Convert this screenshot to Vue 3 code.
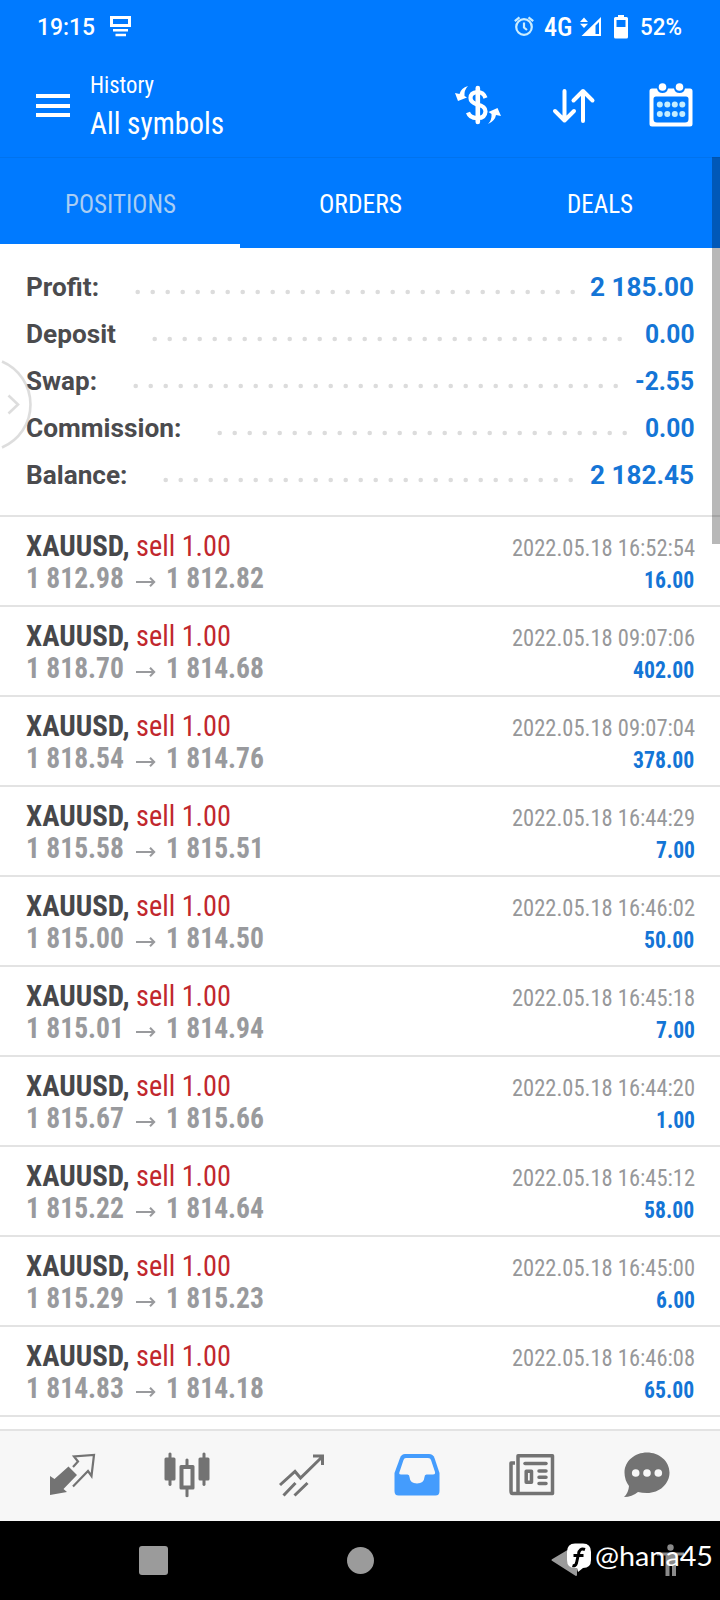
<script setup>
import { h } from 'vue'

// Single line of text condensed to a given advance width.
const Txt = ({ w, t, b = 24, hh = 30 }) =>
  h('svg', { width: w, height: hh, viewBox: `0 0 ${w} ${hh}` }, [
    h('text', { x: 0, y: b, textLength: w, lengthAdjust: 'spacingAndGlyphs' }, t),
  ])
Txt.props = ['w', 't', 'b', 'hh']

const tabs = [
  { t: 'POSITIONS', w: 111, on: true },
  { t: 'ORDERS', w: 83 },
  { t: 'DEALS', w: 66 },
]
const summary = [
  { k: 'Profit:', w: 73, v: '2 185.00', vw: 104, from: 137.7, n: 30 },
  { k: 'Deposit', w: 90, v: '0.00', vw: 49.5, from: 154.7, n: 32 },
  { k: 'Swap:', w: 71, v: '-2.55', vw: 59, from: 135.7, n: 33 },
  { k: 'Commission:', w: 155.5, v: '0.00', vw: 49.5, from: 219.7, n: 28 },
  { k: 'Balance:', w: 101.5, v: '2 182.45', vw: 104, from: 165.7, n: 28 },
]
const rows = [
  ['1 812.98', '1 812.82', '2022.05.18 16:52:54', '16.00'],
  ['1 818.70', '1 814.68', '2022.05.18 09:07:06', '402.00'],
  ['1 818.54', '1 814.76', '2022.05.18 09:07:04', '378.00'],
  ['1 815.58', '1 815.51', '2022.05.18 16:44:29', '7.00'],
  ['1 815.00', '1 814.50', '2022.05.18 16:46:02', '50.00'],
  ['1 815.01', '1 814.94', '2022.05.18 16:45:18', '7.00'],
  ['1 815.67', '1 815.66', '2022.05.18 16:44:20', '1.00'],
  ['1 815.22', '1 814.64', '2022.05.18 16:45:12', '58.00'],
  ['1 815.29', '1 815.23', '2022.05.18 16:45:00', '6.00'],
  ['1 814.83', '1 814.18', '2022.05.18 16:46:08', '65.00'],
]
const profitWidth = (s) => (s.length - 1) * 11.15 + 5.5
</script>

<template>
  <div class="screen">
    <header class="top">
      <div class="status">
        <Txt class="clock" :w="58" t="19:15" :b="23" />
        <svg class="castico" width="22" height="22" viewBox="0 0 22 22">
          <path d="M1.5 1.5H19.5V9.5H1.5Z" fill="none" stroke="#fff" stroke-width="3" />
          <path d="M3 14.3H18M5.500 19H16" stroke="#fff" stroke-width="2.6" />
        </svg>
        <span class="grow"></span>
        <svg class="alarm" width="20" height="20" viewBox="0 0 20 20" fill="none" stroke="#c9ecff" stroke-width="2.2">
          <circle cx="10" cy="11" r="7.800" />
          <path d="M10 6.500V11.500L13 14M.8 5.200L5.500 1.300M19.200 5.200L14.500 1.300" />
        </svg>
        <Txt class="net" :w="28.5" t="4G" :b="24" />
        <svg class="signal" width="22" height="20" viewBox="0 0 22 20" fill="#fff">
          <path d="M21 0V19H1.500ZM19 5L15.500 8.500V17H19Z" fill-rule="evenodd" />
          <path d="M4 .5L8 5H0ZM4 11L8 6.800H0Z" />
        </svg>
        <svg class="battery" width="14" height="24" viewBox="0 0 14 24" fill="#fff">
          <path d="M4 0H10V2H12.500Q14 2 14 3.500V22Q14 23.500 12.500 23.500H1.500Q0 23.500 0 22V3.500Q0 2 1.500 2H4ZM2.500 5V12H11.500V5Z" fill-rule="evenodd" />
        </svg>
        <Txt class="pct" :w="42" t="52%" :b="23" />
      </div>
      <div class="appbar">
        <div class="burger"><i></i><i></i><i></i></div>
        <div class="titles">
          <Txt class="t1" :w="64" t="History" :b="23" />
          <Txt class="t2" :w="134" t="All symbols" :b="30" :hh="38" />
        </div>
        <svg class="dollar" width="46" height="40" viewBox="0 0 46 40">
          <path d="M30.500 13Q28.500 7 22.500 7Q15.500 7.500 15.500 13Q15.500 17 22 19.500Q30.500 21 30.500 26.500Q30 33 23 33Q15 33.500 13 27.500" fill="none" stroke="#fff" stroke-width="4.200" />
          <path d="M22.800 3V37" stroke="#fff" stroke-width="4.600" stroke-linecap="round" />
          <path d="M13 1Q6 3 4.500 9L0 8L3 16L12 12.500L9.500 11Q9 5 13 1ZM33 39Q40 36 41 30L46 31L42.500 23L33.500 27L36.500 29Q37 35 33 39Z" fill="#fff" />
        </svg>
        <svg class="sort" width="42" height="36" viewBox="0 0 42 36" fill="none" stroke="#fff" stroke-width="4" stroke-linecap="round" stroke-linejoin="round">
          <path d="M11.500 3V32M2 23L11.500 32.500L21 23M30 33V3M20.500 12.500L30 3L39.500 12.500" />
        </svg>
        <svg class="cal" width="44" height="44" viewBox="0 0 44 44" fill="#fff">
          <path d="M3 5.500H8Q9 10 13.500 10T19 5.500H25Q26 10 30.500 10T36 5.500H41Q43.500 5.500 43.500 8V41Q43.500 43.500 41 43.500H3Q.5 43.500 .5 41V8Q.5 5.500 3 5.500ZM7 13.500Q4.500 13.500 4.500 16V36Q4.500 39.500 8 39.500H36Q39.500 39.500 39.500 36V16Q39.500 13.500 37 13.500Z" fill-rule="evenodd" />
          <circle cx="13.500" cy="4" r="3.800" /><circle cx="30.500" cy="4" r="3.800" />
          <g fill="#c4edff">
            <template v-for="y in [21.500, 31]" :key="y">
              <circle v-for="x in [10.800, 18.300, 25.800, 33.300]" :key="x" :cx="x" :cy="y" r="3" />
            </template>
          </g>
        </svg>
      </div>
    </header>
    <nav class="tabs">
      <div v-for="x in tabs" :key="x.t" class="tab" :class="{ on: x.on }">
        <Txt :w="x.w" :t="x.t" />
      </div>
    </nav>
    <section class="summary">
      <div v-for="s in summary" :key="s.k" class="srow">
        <Txt class="key" :w="s.w" :t="s.k" />
        <Txt class="val" :w="s.vw" :t="s.v" />
        <svg class="dots" width="720" height="6" viewBox="0 0 720 6" fill="#dcdcdc">
          <circle v-for="i in s.n" :key="i" :cx="s.from + (i - 1) * 15" cy="3" r="2.3" />
        </svg>
      </div>
    </section>
    <main class="list">
      <article v-for="(r, i) in rows" :key="i" class="row">
        <div class="line">
          <Txt class="sym" :w="103.5" t="XAUUSD," />
          <Txt class="side" :w="95" t="sell 1.00" />
          <span class="grow"></span>
          <Txt class="date" :w="183" :t="r[2]" />
        </div>
        <div class="line">
          <Txt class="price" :w="98" :t="r[0]" />
          <svg class="arrow" width="20" height="12" viewBox="0 0 20 12" fill="none" stroke="#999a9d" stroke-width="2"><path d="M0 6H18M14 1.800L18.200 6L14 10.200" /></svg>
          <Txt class="price" :w="98" :t="r[1]" />
          <span class="grow"></span>
          <Txt class="profit" :w="profitWidth(r[3])" :t="r[3]" />
        </div>
      </article>
    </main>
    <footer class="bar">
      <svg width="46" height="46" viewBox="0 0 46 46">
        <path d="M0 24L4.500 27L18.500 14.500L27 23L13.500 37L17 40L0 43Z" fill="#737373" />
        <path d="M23 15L28 9.500L24 4.500L44 3L41.500 24L38 19L23 34.500" fill="none" stroke="#737373" stroke-width="2.200" />
      </svg>
      <svg width="46" height="46" viewBox="0 0 46 46" fill="#737373">
        <path d="M4.500 1.500Q6 -.5 7.500 1.500V5.500H10Q11.500 5.500 11.500 7V27Q11.500 28.500 10 28.500H7.500V33Q6 35 4.500 33V28.500H2Q.5 28.500 .5 27V7Q.5 5.500 2 5.500H4.500ZM38.500 1.500Q40 -.5 41.500 1.500V5.500H44Q45.500 5.500 45.500 7V27Q45.500 28.500 44 28.500H41.500V33Q40 35 38.500 33V28.500H36Q34.500 28.500 34.500 27V7Q34.500 5.500 36 5.500H38.500Z" />
        <path d="M21.500 7.500Q23 5.500 24.500 7.500V13H29Q30.500 13 30.500 14.500V36Q30.500 37.500 29 37.500H24.500V44.500Q23 46 21.500 44.500V37.500H17Q15.500 37.500 15.500 36V14.500Q15.500 13 17 13H21.500ZM19.500 17V33.500H26.500V17Z" fill-rule="evenodd" />
      </svg>
      <svg width="46" height="46" viewBox="0 0 46 46" fill="none" stroke="#737373" stroke-width="3">
        <path d="M1 33L16 19.500L21.500 26L43 5M34 4H43.500V13M4.500 43.500L16.500 31M15.500 43.500L28.500 31" />
      </svg>
      <svg width="46" height="46" viewBox="0 0 46 46">
        <path d="M11 2H35Q39 2 40.500 6L45.500 21V39Q45.500 43.500 41.500 43.500H4.500Q.5 43.500 .5 39V21L6 6Q7.500 2 11 2Z" fill="#449cfd" />
        <path d="M12 6H34Q36.500 6 37 8L41 20Q41.500 22.500 39 22.500H32.500Q30.500 22.500 30.500 25Q30 31.500 23 31.500T15.500 25Q15.500 22.500 13.500 22.500H7Q4.500 22.500 5.500 20L9.500 8Q10 6 12 6Z" fill="#f7f7f7" />
      </svg>
      <svg width="46" height="46" viewBox="0 0 46 46" fill="none" stroke="#737373" stroke-width="3.500">
        <path d="M9 41.500V3.700H43.500V41.500H3.500Q2 41.500 2 39V11H6" stroke-linejoin="round" />
        <path d="M16 11.500H37" stroke-linecap="round" stroke-width="3.500" />
        <path d="M17.200 19.200H22.500V30.200H17.200ZM30 19H37M30 25.300H37M30 31.500H37" stroke-linecap="round" stroke-linejoin="round" />
      </svg>
      <svg width="46" height="46" viewBox="0 0 46 46">
        <path d="M23 0.500C35 .5 45.500 9 45.500 20.500S35.500 41 23 41Q18 41 14 40Q8 45 0 45Q4.500 41 5 34Q.5 28 .5 20.500C.5 9 11 .5 23 .5Z" fill="#737373" />
        <g fill="#f7f7f7"><circle cx="11.700" cy="21" r="3.800" /><circle cx="23" cy="21" r="3.800" /><circle cx="34.300" cy="21" r="3.800" /></g>
      </svg>
    </footer>
    <div class="sysnav">
      <span class="square"></span>
      <span class="round"></span>
      <svg class="mark" width="180" height="50" viewBox="0 0 180 50">
        <path d="M12.500 25L36 11V40Z" fill="#9b9b9b" stroke="#9b9b9b" stroke-width="2" stroke-linejoin="round" />
        <g fill="#8a8a8a"><circle cx="130.500" cy="12.500" r="3.200" /><path d="M117 17.500H144V20.500H136V41H132V31H129.500V41H125.500V20.500H117Z" /></g>
        <path d="M35 8.500H43Q51 8.500 51 17V25Q51 33 43 33L38 37L37 33H35Q27 33 27 25V17Q27 8.500 35 8.500Z" fill="#fff" />
        <path d="M45 14.500Q39.500 12.500 38.500 19L36.500 28Q35.500 31.500 32.500 30.500M33.500 20.500H43.500" fill="none" stroke="#000" stroke-width="3" />
        <text x="55" y="30.500" textLength="118" lengthAdjust="spacingAndGlyphs">@hana45</text>
      </svg>
    </div>
    <div class="scroll"></div>
    <svg class="handle" width="34" height="94" viewBox="0 0 34 94" fill="none" stroke="#bbb" stroke-opacity=".5" stroke-width="2.600">
      <path d="M2 4.500A46.700 46.700 0 0 1 2 90.500M8.500 38.500L18 47.500L8.500 56.500" />
    </svg>
  </div>
</template>

<style>
body { margin: 0; background: #000; }
</style>
<style scoped>
.screen { position: relative; width: 720px; height: 1600px; overflow: hidden; display: flex; flex-direction: column; background: #fff; font-family: Roboto, "Liberation Sans", sans-serif; }
svg { display: block; overflow: visible; flex: none; }
.grow { flex: 1; }
.top { height: 157px; background: #007aff; fill: #fff; }
.status { height: 54px; padding: 12px 38px 0 37px; box-sizing: border-box; display: flex; align-items: flex-start; }
.clock, .pct { font-size: 23px; font-weight: 500; }
.castico { margin: 4px 0 0 15px; }
.alarm { margin: 4px 10px 0 0; }
.net { font-size: 26px; font-weight: 500; }
.signal { margin: 5px 12px 0 8px; }
.battery { margin: 3px 12px 0 0; }
.net, .titles, .tabs, .list { font-stretch: 75%; }
.appbar { height: 103px; display: flex; align-items: flex-start; }
.burger { width: 34px; margin: 40px 0 0 36px; display: grid; gap: 5.500px; }
.burger i { height: 4px; background: #fff; }
.titles { width: 366px; margin: 16px 0 0 19.500px; }
.t1 { font-size: 24px; }
.t2 { font-size: 32px; margin-top: 3.500px; }
.dollar { margin: 31px 0 0 -1px; }
.sort { margin: 34px 0 0 52.500px; }
.cal { margin: 29px 0 0 53.500px; }
.tabs { height: 91px; display: grid; grid-template-columns: repeat(3, 240px); background: #007aff; box-shadow: inset 0 1px #0073ee; }
.tab { box-sizing: border-box; padding-top: 32px; display: flex; justify-content: center; font-size: 26px; fill: #fff; border-bottom: 4px solid transparent; }
.tab.on { fill: #a9cdf3; border-color: #fff; }
.summary { height: 267px; padding: 24px 26px 0 26px; box-sizing: border-box; }
.srow { position: relative; height: 47px; display: flex; justify-content: space-between; font-size: 26px; font-weight: 700; }
.key { fill: #4b4b4e; }
.val { fill: #1475d6; }
.dots { position: absolute; left: -26px; top: 17px; }
.list { height: 914px; }
.row { height: 90px; box-sizing: border-box; border-top: 2px solid #e3e3e3; padding: 15px 25.500px 0 26px; }
.row:last-child { height: 92px; border-bottom: 2px solid #e3e3e3; }
.line { height: 32px; display: flex; align-items: flex-start; }
.sym, .price { font-size: 30px; font-weight: 700; fill: #47484b; }
.side { font-size: 30px; fill: #c1272d; margin-left: 6px; }
.date { font-size: 24.500px; fill: #97989a; }
.price { fill: #999a9d; }
.arrow { margin: 12px 10.500px 0 11.500px; }
.profit { font-size: 24.500px; font-weight: 700; fill: #1475d6; }
.bar { height: 92px; box-sizing: border-box; border-top: 2px solid #e3e3e3; background: #f7f7f7; display: flex; justify-content: space-between; padding: 21px 50px 0 49.500px; }
.sysnav { height: 79px; background: #000; display: flex; align-items: flex-start; }
.square { width: 29px; height: 29px; margin: 25px 0 0 139px; border-radius: 3px; background: #9b9b9b; }
.round { width: 27px; height: 27px; margin: 26px 0 0 179px; border-radius: 50%; background: #9b9b9b; }
.mark { margin: 14px 0 0 166px; font: 27px Lato, sans-serif; fill: #fff; }
.scroll { position: absolute; right: 0; top: 157px; width: 8px; height: 387px; background: rgba(0, 0, 0, .28); }
.handle { position: absolute; left: 0; top: 356.500px; }
</style>
